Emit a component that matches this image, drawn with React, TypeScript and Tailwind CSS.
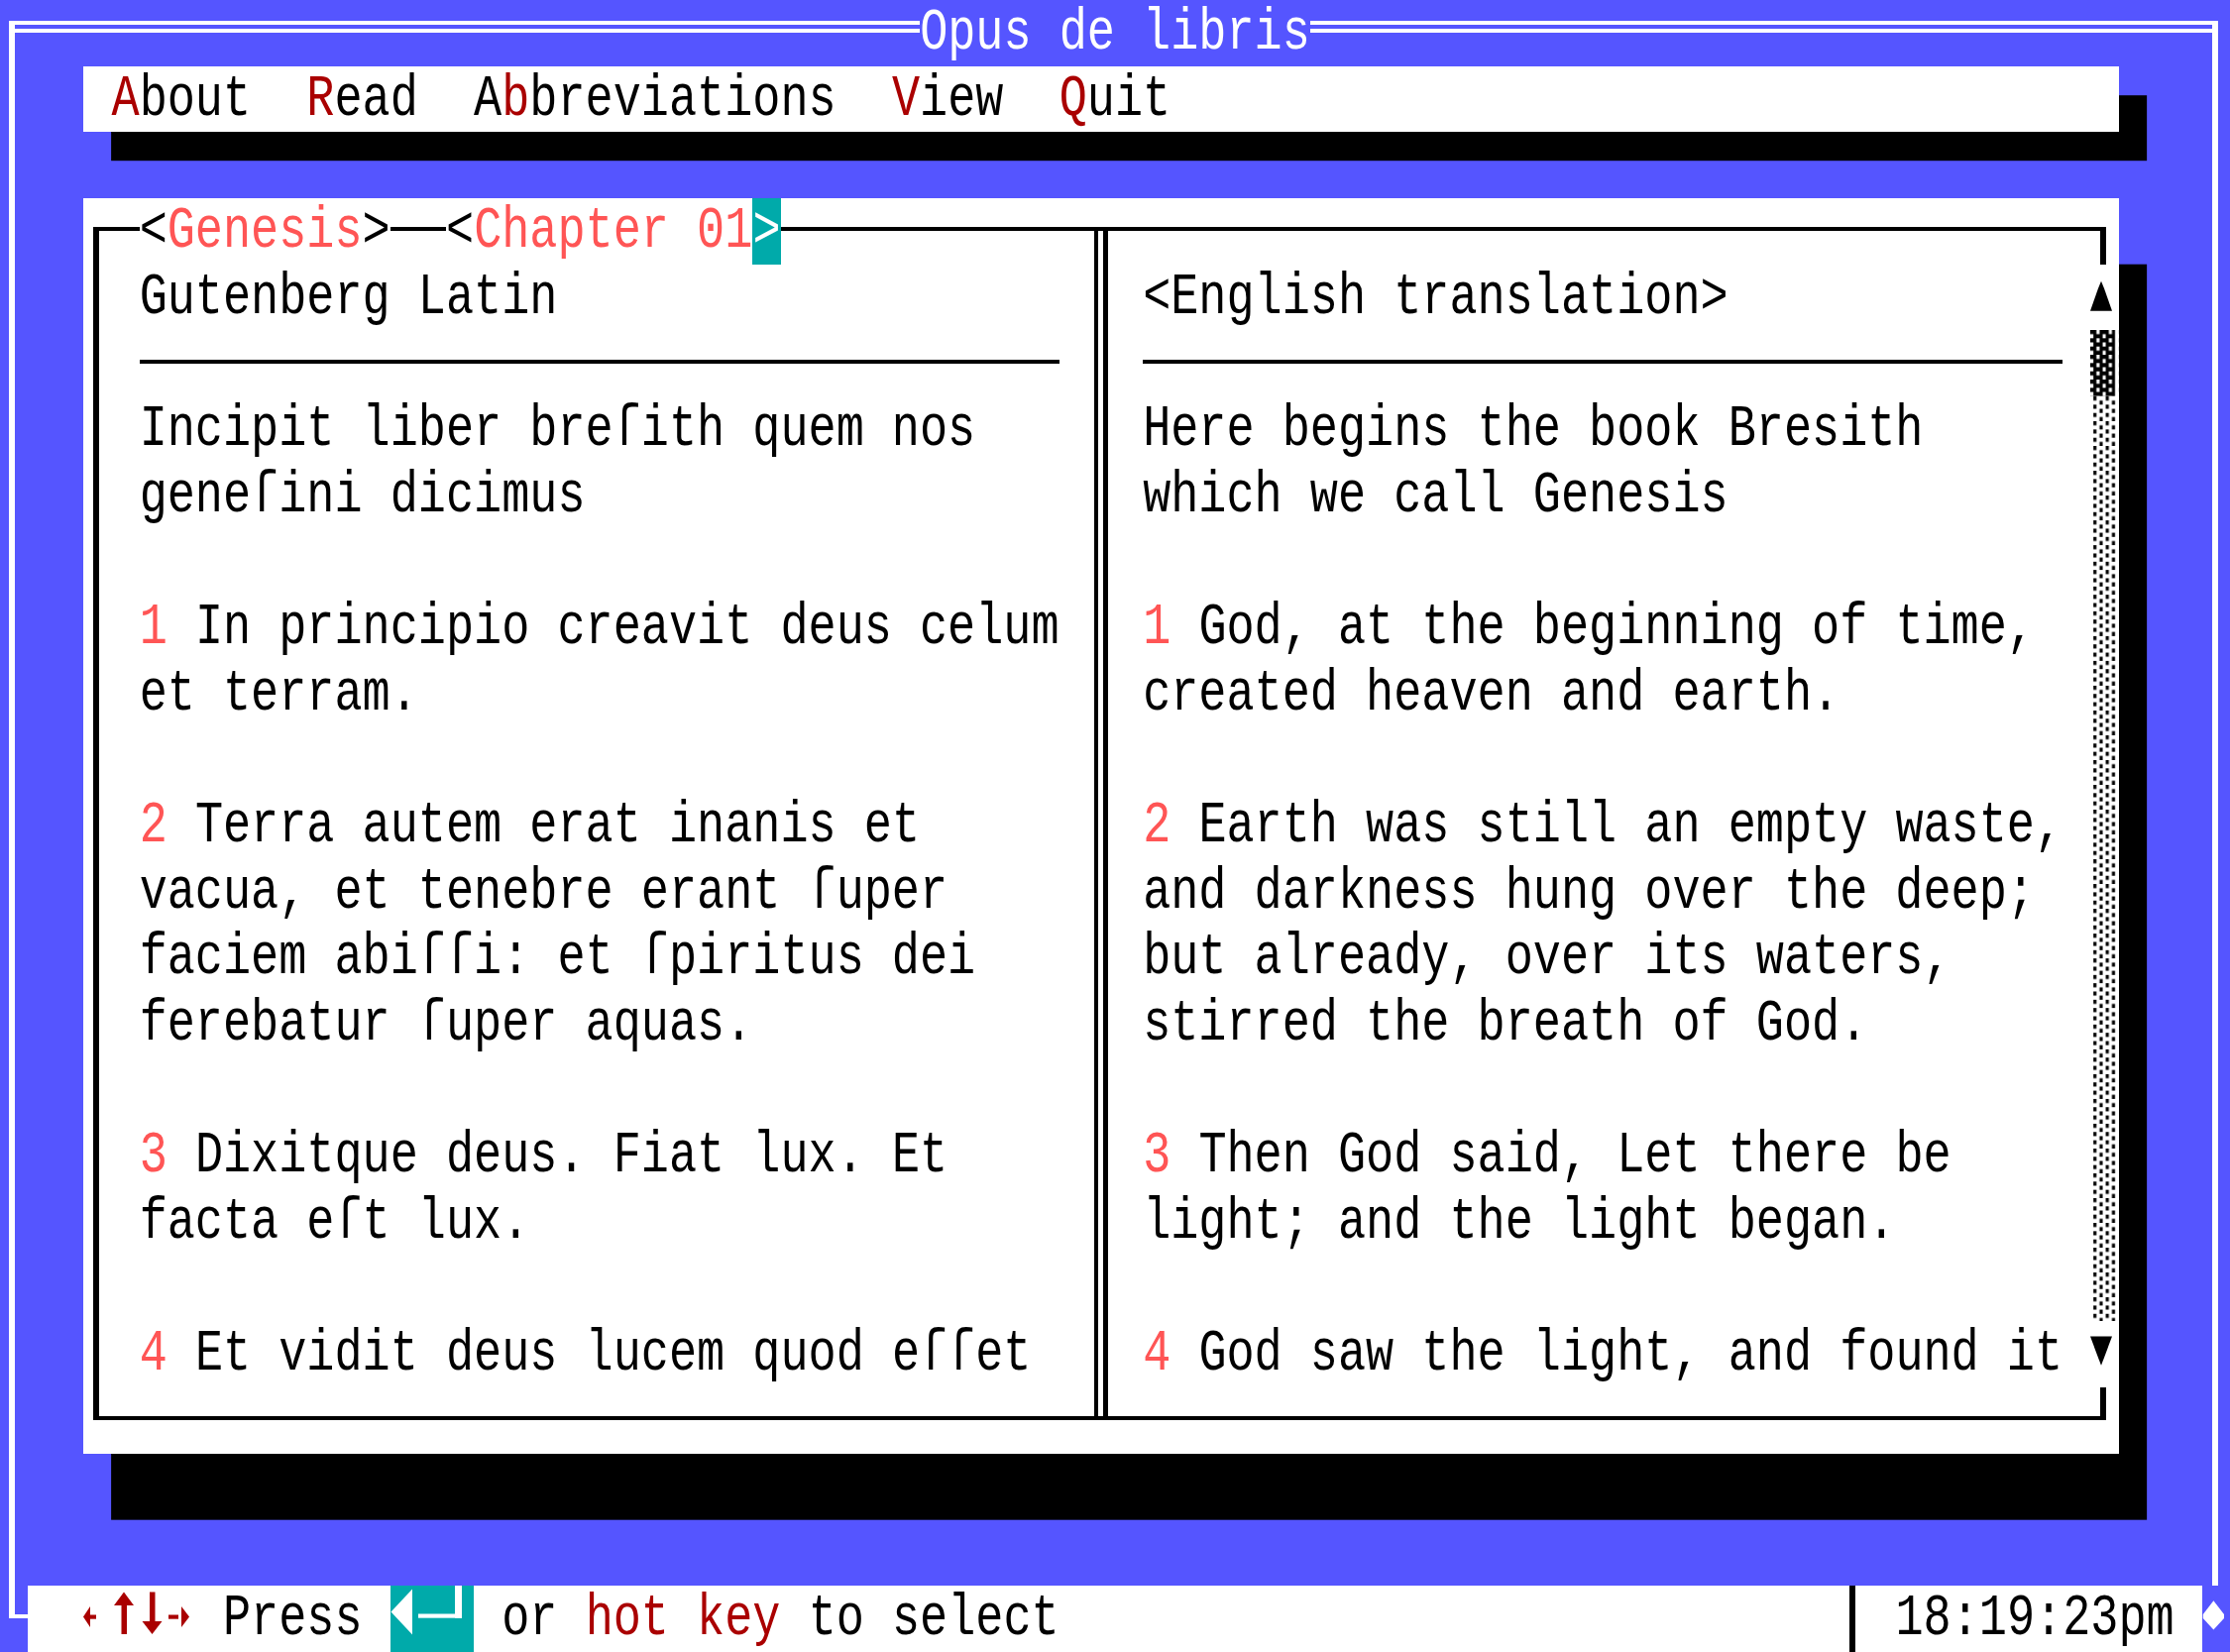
import type { ReactNode } from "react";

// text-mode screen: 80 x 25 cells of 28.125 x 66.68 px

type Row = { n?: string; t: string } | "sep";

const LATIN: Row[] = [
  { t: "Gutenberg Latin" },
  "sep",
  { t: "Incipit liber breſith quem nos" },
  { t: "geneſini dicimus" },
  { t: "" },
  { n: "1", t: "In principio creavit deus celum" },
  { t: "et terram." },
  { t: "" },
  { n: "2", t: "Terra autem erat inanis et" },
  { t: "vacua, et tenebre erant ſuper" },
  { t: "faciem abiſſi: et ſpiritus dei" },
  { t: "ferebatur ſuper aquas." },
  { t: "" },
  { n: "3", t: "Dixitque deus. Fiat lux. Et" },
  { t: "facta eſt lux." },
  { t: "" },
  { n: "4", t: "Et vidit deus lucem quod eſſet" },
];

const ENGLISH: Row[] = [
  { t: "<English translation>" },
  "sep",
  { t: "Here begins the book Bresith" },
  { t: "which we call Genesis" },
  { t: "" },
  { n: "1", t: "God, at the beginning of time," },
  { t: "created heaven and earth." },
  { t: "" },
  { n: "2", t: "Earth was still an empty waste," },
  { t: "and darkness hung over the deep;" },
  { t: "but already, over its waters," },
  { t: "stirred the breath of God." },
  { t: "" },
  { n: "3", t: "Then God said, Let there be" },
  { t: "light; and the light began." },
  { t: "" },
  { n: "4", t: "God saw the light, and found it" },
];

// tall, narrow text-mode glyphs; scaled box stays inside its 66.68px row
function T({ children }: { children: ReactNode }) {
  return (
    <span className="block h-[50px] translate-y-[8.5px] scale-y-[1.28] leading-[50px] whitespace-pre">
      {children}
    </span>
  );
}

function Pane({ rows, className }: { rows: Row[]; className: string }) {
  return (
    <div className={className}>
      {rows.map((r, i) =>
        r === "sep" ? (
          <div key={i} className="h-[66.68px]">
            <div className="mt-[29.2px] h-[4.17px] bg-black" />
          </div>
        ) : (
          <div key={i} className="h-[66.68px]">
            <T>
              {r.n && <span className="text-[#ff5555]">{r.n} </span>}
              {r.t}
            </T>
          </div>
        )
      )}
    </div>
  );
}

function ScrollBar() {
  return (
    <div className="col-start-73 row-start-2 row-span-17 flex flex-col bg-white">
      <div className="h-[66.68px]">
        <svg className="block" width="28.125" height="66.68">
          <polygon points="11,16.7 14,24 22,46.7 0,46.7 8,24" fill="#000" />
        </svg>
      </div>
      <div className="h-[66.68px]">
        <svg className="block" width="28.125" height="66.68">
          <defs>
            <pattern id="thumb" width="28.125" height="8.34" patternUnits="userSpaceOnUse">
              <rect x="0" y="0" width="25" height="8.34" fill="#000" />
              <rect x="6.25" y="0" width="3.125" height="4.17" fill="#fff" />
              <rect x="18.75" y="0" width="3.125" height="4.17" fill="#fff" />
              <rect x="0" y="4.17" width="3.125" height="4.17" fill="#fff" />
              <rect x="12.5" y="4.17" width="3.125" height="4.17" fill="#fff" />
            </pattern>
          </defs>
          <rect width="28.125" height="66.68" fill="url(#thumb)" />
        </svg>
      </div>
      <div className="flex-1">
        <svg className="block h-full w-full">
          <defs>
            <pattern id="shade" width="28.125" height="8.34" patternUnits="userSpaceOnUse">
              <rect x="3.125" y="0" width="3.125" height="4.17" fill="#000" />
              <rect x="15.625" y="0" width="3.125" height="4.17" fill="#000" />
              <rect x="9.375" y="4.17" width="3.125" height="4.17" fill="#000" />
              <rect x="21.875" y="4.17" width="3.125" height="4.17" fill="#000" />
            </pattern>
          </defs>
          <rect width="100%" height="100%" fill="url(#shade)" />
        </svg>
      </div>
      <div className="h-[66.68px]">
        <svg className="block" width="28.125" height="66.68">
          <polygon points="0,15.6 22,15.6 14,37 11,44.7 8,37" fill="#000" />
        </svg>
      </div>
    </div>
  );
}

export default function App() {
  return (
    <div className="grid h-[1667px] w-[2250px] grid-cols-[repeat(80,28.125px)] grid-rows-[repeat(25,66.68px)] overflow-hidden bg-[#5555ff] font-['Liberation_Mono','DejaVu_Sans_Mono',monospace] text-[46.87px] leading-[66.68px] text-black">
      {/* outer frame: double top, single sides */}
      <div className="col-start-1 col-span-80 row-start-1 row-span-25 mt-[20.84px] mr-[12.5px] mb-[33.34px] ml-[9.4px] border-x-[6.25px] border-y-[4.17px] border-white">
        <div className="mt-[4.17px] h-[4.17px] bg-white" />
      </div>

      <div className="col-start-34 col-span-14 row-start-1 bg-[#5555ff] text-white">
        <T>Opus de libris</T>
      </div>

      {/* menu bar */}
      <div className="col-start-4 col-span-73 row-start-2 bg-white shadow-[28.125px_29.2px_0_0_#000]">
        <T>
          {" "}
          <span className="text-[#aa0000]">A</span>bout{"  "}
          <span className="text-[#aa0000]">R</span>ead{"  "}A
          <span className="text-[#aa0000]">b</span>breviations{"  "}
          <span className="text-[#aa0000]">V</span>iew{"  "}
          <span className="text-[#aa0000]">Q</span>uit
        </T>
      </div>

      {/* reading window */}
      <div className="col-start-4 col-span-73 row-start-4 row-span-19 grid grid-cols-[repeat(73,28.125px)] grid-rows-[repeat(19,66.68px)] bg-white shadow-[28.125px_66.68px_0_0_#000]">
        <div className="col-start-1 col-span-73 row-start-1 row-span-19 mt-[29.2px] mr-[12.5px] mb-[33.34px] ml-[9.4px] border-x-[6.25px] border-y-[4.17px] border-black" />
        <div className="col-start-37 row-start-1 row-span-19 mt-[29.2px] mb-[33.34px] ml-[7px] w-[14px] border-l-[4px] border-r-[5px] border-black" />

        <div className="col-start-3 col-span-9 row-start-1 bg-white">
          <T>
            {"<"}
            <span className="text-[#ff5555]">Genesis</span>
            {">"}
          </T>
        </div>
        <div className="col-start-14 col-span-11 row-start-1 bg-white">
          <T>
            {"<"}
            <span className="text-[#ff5555]">Chapter 01</span>
          </T>
        </div>
        <div className="col-start-25 row-start-1 bg-[#00aaaa] text-white">
          <T>{">"}</T>
        </div>

        <Pane rows={LATIN} className="col-start-3 col-span-33 row-start-2 row-span-17 flex flex-col" />
        <Pane rows={ENGLISH} className="col-start-39 col-span-33 row-start-2 row-span-17 flex flex-col" />

        <ScrollBar />
      </div>

      {/* status line */}
      <div className="col-start-2 col-span-78 row-start-25 grid grid-cols-[repeat(78,28.125px)] bg-white">
        <div className="col-start-3 col-span-4">
          <svg className="block" width="112.5" height="66.68" fill="#aa0000">
            <polygon points="0,31.5 7,21 7,42" />
            <rect x="5" y="29.5" width="8" height="4.17" />
            <polygon points="41,6.5 31,20 51,20" />
            <rect x="38.5" y="18" width="5.5" height="31" />
            <rect x="67" y="6.5" width="5.5" height="31" />
            <polygon points="59.5,36 79.5,36 69.5,49" />
            <rect x="86" y="29.5" width="10" height="4.17" />
            <polygon points="107,31.5 99,21 99,42" />
          </svg>
        </div>
        <div className="col-start-8 col-span-5">
          <T>Press</T>
        </div>
        <div className="col-start-14 col-span-3 bg-[#00aaaa]">
          <svg className="block" width="84.375" height="66.68">
            <polygon points="0.5,26.5 22,3.5 22,49.5" fill="#fff" />
            <rect x="28" y="28.5" width="44" height="4.17" fill="#fff" />
            <rect x="65" y="0" width="7" height="32.67" fill="#fff" />
          </svg>
        </div>
        <div className="col-start-18 col-span-2">
          <T>or</T>
        </div>
        <div className="col-start-21 col-span-7 text-[#aa0000]">
          <T>hot key</T>
        </div>
        <div className="col-start-29 col-span-9">
          <T>to select</T>
        </div>
        <div className="col-start-66">
          <div className="ml-[9.4px] h-full w-[6.25px] bg-black" />
        </div>
        <div className="col-start-68 col-span-10">
          <T>18:19:23pm</T>
        </div>
      </div>

      <div className="col-start-80 row-start-25 bg-[#5555ff]">
        <svg className="block" width="28.125" height="66.68">
          <polygon points="11.4,15.2 22,29 22,33 11.4,44.5 0.8,33 0.8,29" fill="#fff" />
        </svg>
      </div>
    </div>
  );
}
